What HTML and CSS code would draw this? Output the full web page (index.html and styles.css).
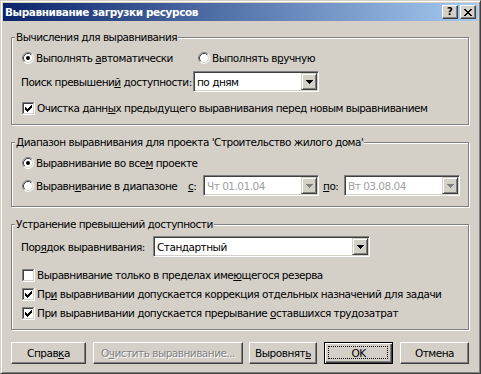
FILE: index.html
```html
<!DOCTYPE html>
<html lang="ru">
<head>
<meta charset="utf-8">
<title>Выравнивание загрузки ресурсов</title>
<link rel="stylesheet" href="styles.css">
</head>
<body>
<div class="window">
  <div class="titlebar">
    <span class="title">Выравнивание загрузки ресурсов</span>
    <div class="tbtns">
      <span class="tbtn q">?</span>
      <span class="tbtn"><svg width="8" height="7" viewBox="0 0 8 7"><path d="M0 0h2v1H0zM6 0h2v1H6zM1 1h2v1H1zM5 1h2v1H5zM2 2h4v1H2zM3 3h2v1H3zM2 4h4v1H2zM1 5h2v1H1zM5 5h2v1H5zM0 6h2v1H0zM6 6h2v1H6z" fill="#000"/></svg></span>
    </div>
  </div>
  <div class="content">
    <div class="group g1">
      <div class="legend">Вычисления для выравнивания</div>
      <div class="row r16 mt6">
        <span class="opt w175"><svg class="radio" width="12" height="12" viewBox="0 0 12 12"><circle cx="6" cy="6" r="5" fill="#fff"/><path d="M9.89 2.11A5.5 5.5 0 0 0 2.11 9.89" fill="none" stroke="#808080"/><path d="M2.11 9.89A5.5 5.5 0 0 0 9.89 2.11" fill="none" stroke="#fff"/><path d="M9.18 2.82A4.5 4.5 0 0 0 2.82 9.18" fill="none" stroke="#404040"/><path d="M2.82 9.18A4.5 4.5 0 0 0 9.18 2.82" fill="none" stroke="#D4D0C8"/><circle cx="6" cy="6" r="2" fill="#000"/></svg><span>Выполнять <u>а</u>втоматически</span></span>
        <span class="opt"><svg class="radio" width="12" height="12" viewBox="0 0 12 12"><circle cx="6" cy="6" r="5" fill="#fff"/><path d="M9.89 2.11A5.5 5.5 0 0 0 2.11 9.89" fill="none" stroke="#808080"/><path d="M2.11 9.89A5.5 5.5 0 0 0 9.89 2.11" fill="none" stroke="#fff"/><path d="M9.18 2.82A4.5 4.5 0 0 0 2.82 9.18" fill="none" stroke="#404040"/><path d="M2.82 9.18A4.5 4.5 0 0 0 9.18 2.82" fill="none" stroke="#D4D0C8"/></svg><span>Выполнять в<u>р</u>учную</span></span>
      </div>
      <div class="row r21 mt5">
        <span class="lbl w172">Поиск превышени<u>й</u> доступности:</span>
        <div class="combo w126"><span class="val">по дням</span><span class="dd"><svg width="7" height="4" viewBox="0 0 7 4"><path d="M0 0h7v1H0zM1 1h5v1H1zM2 2h3v1H2zM3 3h1v1H3z" fill="#000"/></svg></span></div>
      </div>
      <div class="row r16 mt8">
        <span class="opt"><svg class="check" width="13" height="13" viewBox="0 0 13 13"><path d="M0 0h12v1H1v11H0z" fill="#808080"/><path d="M12 0h1v13H0v-1h12z" fill="#fff"/><path d="M1 1h10v1H2v9H1z" fill="#404040"/><path d="M11 1h1v11H1v-1h10z" fill="#D4D0C8"/><rect x="2" y="2" width="9" height="9" fill="#fff"/><path d="M3 5h1v3H3zM4 6h1v3H4zM5 7h1v3H5zM6 6h1v3H6zM7 5h1v3H7zM8 4h1v3H8zM9 3h1v3H9z" fill="#000"/></svg><span>Очистка данн<u>ы</u>х предыдущего выравнивания перед новым выравниванием</span></span>
      </div>
    </div>

    <div class="group g2">
      <div class="legend">Диапазон выравнивания для проекта 'Строительство жилого дома'</div>
      <div class="row r16 mt6">
        <span class="opt"><svg class="radio" width="12" height="12" viewBox="0 0 12 12"><circle cx="6" cy="6" r="5" fill="#fff"/><path d="M9.89 2.11A5.5 5.5 0 0 0 2.11 9.89" fill="none" stroke="#808080"/><path d="M2.11 9.89A5.5 5.5 0 0 0 9.89 2.11" fill="none" stroke="#fff"/><path d="M9.18 2.82A4.5 4.5 0 0 0 2.82 9.18" fill="none" stroke="#404040"/><path d="M2.82 9.18A4.5 4.5 0 0 0 9.18 2.82" fill="none" stroke="#D4D0C8"/><circle cx="6" cy="6" r="2" fill="#000"/></svg><span>Выравнивание во все<u>м</u> проекте</span></span>
      </div>
      <div class="row r21 mt4">
        <span class="opt w166"><svg class="radio" width="12" height="12" viewBox="0 0 12 12"><circle cx="6" cy="6" r="5" fill="#fff"/><path d="M9.89 2.11A5.5 5.5 0 0 0 2.11 9.89" fill="none" stroke="#808080"/><path d="M2.11 9.89A5.5 5.5 0 0 0 9.89 2.11" fill="none" stroke="#fff"/><path d="M9.18 2.82A4.5 4.5 0 0 0 2.82 9.18" fill="none" stroke="#404040"/><path d="M2.82 9.18A4.5 4.5 0 0 0 9.18 2.82" fill="none" stroke="#D4D0C8"/></svg><span>Выравн<u>и</u>вание в диапазоне</span></span>
        <span class="lbl w15"><u>с</u>:</span>
        <div class="combo w116 disabled"><span class="val">Чт 01.01.04</span><span class="dd"><svg width="7" height="4" viewBox="0 0 7 4"><path d="M0 0h7v1H0zM1 1h5v1H1zM2 2h3v1H2zM3 3h1v1H3z" fill="#808080"/></svg></span></div>
        <span class="lbl w25 ml4"><u>п</u>о:</span>
        <div class="combo w116 disabled"><span class="val">Вт 03.08.04</span><span class="dd"><svg width="7" height="4" viewBox="0 0 7 4"><path d="M0 0h7v1H0zM1 1h5v1H1zM2 2h3v1H2zM3 3h1v1H3z" fill="#808080"/></svg></span></div>
      </div>
    </div>

    <div class="group g3">
      <div class="legend">Устранение превышений доступности</div>
      <div class="row r21 mt5">
        <span class="lbl w132">Пор<u>я</u>док выравнивания:</span>
        <div class="combo w217"><span class="val">Стандартный</span><span class="dd"><svg width="7" height="4" viewBox="0 0 7 4"><path d="M0 0h7v1H0zM1 1h5v1H1zM2 2h3v1H2zM3 3h1v1H3z" fill="#000"/></svg></span></div>
      </div>
      <div class="row r16 mt10">
        <span class="opt"><svg class="check" width="13" height="13" viewBox="0 0 13 13"><path d="M0 0h12v1H1v11H0z" fill="#808080"/><path d="M12 0h1v13H0v-1h12z" fill="#fff"/><path d="M1 1h10v1H2v9H1z" fill="#404040"/><path d="M11 1h1v11H1v-1h10z" fill="#D4D0C8"/><rect x="2" y="2" width="9" height="9" fill="#fff"/></svg><span>Выравнивание только в пределах име<u>ю</u>щегося резерва</span></span>
      </div>
      <div class="row r16 mt3">
        <span class="opt"><svg class="check" width="13" height="13" viewBox="0 0 13 13"><path d="M0 0h12v1H1v11H0z" fill="#808080"/><path d="M12 0h1v13H0v-1h12z" fill="#fff"/><path d="M1 1h10v1H2v9H1z" fill="#404040"/><path d="M11 1h1v11H1v-1h10z" fill="#D4D0C8"/><rect x="2" y="2" width="9" height="9" fill="#fff"/><path d="M3 5h1v3H3zM4 6h1v3H4zM5 7h1v3H5zM6 6h1v3H6zM7 5h1v3H7zM8 4h1v3H8zM9 3h1v3H9z" fill="#000"/></svg><span>Пр<u>и</u> выравнивании допускается коррекция отдельных назначений для задачи</span></span>
      </div>
      <div class="row r16 mt3">
        <span class="opt"><svg class="check" width="13" height="13" viewBox="0 0 13 13"><path d="M0 0h12v1H1v11H0z" fill="#808080"/><path d="M12 0h1v13H0v-1h12z" fill="#fff"/><path d="M1 1h10v1H2v9H1z" fill="#404040"/><path d="M11 1h1v11H1v-1h10z" fill="#D4D0C8"/><rect x="2" y="2" width="9" height="9" fill="#fff"/><path d="M3 5h1v3H3zM4 6h1v3H4zM5 7h1v3H5zM6 6h1v3H6zM7 5h1v3H7zM8 4h1v3H8zM9 3h1v3H9z" fill="#000"/></svg><span>При выравнивании допускается прерывание <u>о</u>ставшихся трудозатрат</span></span>
      </div>
    </div>

    <div class="buttons">
      <span class="btn w75"><span>Справ<u>к</u>а</span></span>
      <span class="btn w150 dis"><span>О<u>ч</u>истить выравнивание...</span></span>
      <span class="btn w68 ml6"><span>Выровнят<u>ь</u></span></span>
      <span class="btn w69 default"><span>OK</span></span>
      <span class="btn w69"><span>Отмена</span></span>
    </div>
  </div>
</div>
</body>
</html>
```
FILE: styles.css
```css
html, body {
  margin: 0;
  padding: 0;
  background: #D4D0C8;
}
body {
  font-family: "DejaVu Sans", "Liberation Sans", sans-serif;
  font-size: 10.5px;
  letter-spacing: -0.5px;
  color: #000;
}
u { text-decoration: underline; text-underline-offset: 1px; }

.window {
  width: 481px;
  height: 374px;
  box-sizing: border-box;
  background: #D4D0C8;
  border: 1px solid;
  border-color: #D4D0C8 #404040 #404040 #D4D0C8;
  box-shadow: inset 1px 1px 0 #fff, inset -1px -1px 0 #808080;
  padding: 2px;
  display: flex;
  flex-direction: column;
}

.titlebar {
  height: 18px;
  background: linear-gradient(to right, #0A246A, #A6CAF0);
  display: flex;
  align-items: center;
  justify-content: space-between;
  padding: 0 2px 0 2px;
}
.title {
  color: #fff;
  font-weight: bold;
  font-size: 10.5px;
  letter-spacing: -0.4px;
  white-space: nowrap;
}
.tbtns { display: flex; gap: 2px; }
.tbtn {
  width: 16px;
  height: 14px;
  box-sizing: border-box;
  background: #D4D0C8;
  border: 1px solid;
  border-color: #fff #404040 #404040 #fff;
  box-shadow: inset -1px -1px 0 #808080;
  display: flex;
  align-items: center;
  justify-content: center;
}
.tbtn.q {
  font-weight: bold;
  font-size: 10px;
  letter-spacing: 0;
  line-height: 12px;
}

.content {
  padding: 16px 9px 0 8px;
  display: flex;
  flex-direction: column;
}

.group {
  border: 1px solid #808080;
  box-shadow: 1px 1px 0 #fff, inset 1px 1px 0 #fff;
  padding: 0 0 0 9px;
  display: flex;
  flex-direction: column;
}
.g1 { padding-bottom: 8px; }
.g2 { margin-top: 17px; padding-bottom: 10px; }
.g3 { margin-top: 17px; padding-bottom: 8px; }

.legend {
  margin: -7px 0 0 -6px;
  height: 13px;
  line-height: 13px;
  background: #D4D0C8;
  padding: 0 1px;
  align-self: flex-start;
  white-space: nowrap;
}

.row {
  display: flex;
  align-items: center;
  white-space: nowrap;
}
.r16 { height: 16px; }
.r21 { height: 21px; }
.mt3 { margin-top: 3px; }
.mt4 { margin-top: 4px; }
.mt5 { margin-top: 5px; }
.mt6 { margin-top: 6px; }
.mt8 { margin-top: 8px; }
.mt10 { margin-top: 10px; }
.ml4 { margin-left: 4px; }

.opt {
  display: flex;
  align-items: center;
  padding-left: 1px;
  flex: none;
}
.radio { margin-right: 2px; flex: none; }
.check { margin-right: 2px; flex: none; }
.lbl { flex: none; }

.w175 { width: 175px; }
.w166 { width: 166px; }
.w172 { width: 172px; }
.w132 { width: 132px; }
.w15 { width: 15px; }
.w25 { width: 21px; }
.w126 { width: 126px; }
.w116 { width: 116px; }
.w217 { width: 217px; }

.combo {
  height: 21px;
  box-sizing: border-box;
  border: 1px solid;
  border-color: #808080 #fff #fff #808080;
  box-shadow: inset 1px 1px 0 #404040, inset -1px -1px 0 #D4D0C8;
  padding: 1px;
  background: #fff;
  display: flex;
  align-items: center;
  flex: none;
}
.combo .val {
  flex: 1;
  padding-left: 2px;
  overflow: hidden;
}
.combo.disabled .val { color: #A0A0A0; }
.dd {
  width: 16px;
  height: 17px;
  box-sizing: border-box;
  background: #D4D0C8;
  border: 1px solid;
  border-color: #D4D0C8 #404040 #404040 #D4D0C8;
  box-shadow: inset 1px 1px 0 #fff, inset -1px -1px 0 #808080;
  display: flex;
  align-items: center;
  justify-content: center;
  flex: none;
}

.buttons {
  margin-top: 12px;
  display: flex;
  gap: 7px;
}
.btn {
  height: 22px;
  box-sizing: border-box;
  background: #D4D0C8;
  border: 1px solid;
  border-color: #fff #404040 #404040 #fff;
  box-shadow: inset -1px -1px 0 #808080;
  display: flex;
  align-items: center;
  justify-content: center;
  white-space: nowrap;
  position: relative;
}
.btn.ml6 { margin-left: -1px; }
.w75 { width: 75px; }
.w150 { width: 150px; }
.w68 { width: 68px; }
.w69 { width: 69px; }
.btn.dis {
  color: #808080;
  text-shadow: 1px 1px 0 #fff;
}
.btn.default {
  border: 1px solid #000;
  box-shadow: inset 1px 1px 0 #fff, inset -1px -1px 0 #404040, inset -2px -2px 0 #808080;
}
.btn.default::after {
  content: "";
  position: absolute;
  left: 3px;
  top: 3px;
  right: 4px;
  bottom: 4px;
  border: 1px dotted #000;
}
```
